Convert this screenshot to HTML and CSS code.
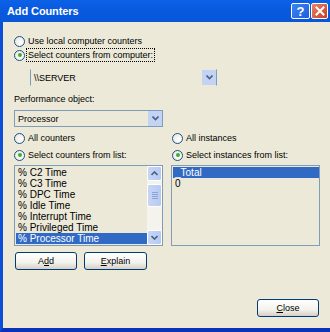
FILE: index.html
```html
<!DOCTYPE html>
<html>
<head>
<meta charset="utf-8">
<link rel="stylesheet" href="styles.css">
</head>
<body>
<div class="window">
  <div class="titlebar">
    <span class="title">Add Counters</span>
    <div class="tb-btns">
      <span class="tb-btn tb-help">?</span>
      <span class="tb-btn tb-close"><svg width="10" height="10" viewBox="0 0 10 10"><path d="M1.5 1.5 L8.5 8.5 M8.5 1.5 L1.5 8.5" stroke="#fff" stroke-width="2" stroke-linecap="square"/></svg></span>
    </div>
  </div>
  <div class="body">
    <div class="radio-row first"><span class="radio"></span><span>Use local computer counters</span></div>
    <div class="radio-row"><span class="radio checked"></span><span class="focus">Select counters from computer:</span></div>
    <div class="combo server">
      <span class="combo-text">\\SERVER</span>
      <span class="dd"><svg width="7" height="5" viewBox="0 0 7 5"><path d="M0.5 0.5 L3.5 3.5 L6.5 0.5" fill="none" stroke="#4d6185" stroke-width="1.6"/></svg></span>
    </div>
    <div class="label">Performance object:</div>
    <div class="combo obj">
      <span class="combo-text">Processor</span>
      <span class="dd"><svg width="7" height="5" viewBox="0 0 7 5"><path d="M0.5 0.5 L3.5 3.5 L6.5 0.5" fill="none" stroke="#4d6185" stroke-width="1.6"/></svg></span>
    </div>
    <div class="cols">
      <div class="col">
        <div class="radio-row"><span class="radio"></span><span>All counters</span></div>
        <div class="radio-row second"><span class="radio checked"></span><span>Select counters from list:</span></div>
        <div class="listbox counters">
          <ul class="items">
            <li>% C2 Time</li>
            <li>% C3 Time</li>
            <li>% DPC Time</li>
            <li>% Idle Time</li>
            <li>% Interrupt Time</li>
            <li>% Privileged Time</li>
            <li class="sel">% Processor Time</li>
          </ul>
          <div class="scrollbar">
            <span class="sb-btn"><svg width="7" height="5" viewBox="0 0 7 5"><path d="M0.5 4 L3.5 1 L6.5 4" fill="none" stroke="#4d6185" stroke-width="1.6"/></svg></span>
            <span class="sb-track"><span class="sb-thumb"><i></i><i></i><i></i><i></i></span></span>
            <span class="sb-btn"><svg width="7" height="5" viewBox="0 0 7 5"><path d="M0.5 1 L3.5 4 L6.5 1" fill="none" stroke="#4d6185" stroke-width="1.6"/></svg></span>
          </div>
        </div>
        <div class="btn-row">
          <button class="btn">A<u>d</u>d</button>
          <button class="btn"><u>E</u>xplain</button>
        </div>
      </div>
      <div class="col">
        <div class="radio-row"><span class="radio"></span><span>All instances</span></div>
        <div class="radio-row second"><span class="radio checked"></span><span>Select instances from list:</span></div>
        <div class="listbox instances">
          <ul class="items">
            <li class="sel">_Total</li>
            <li>0</li>
          </ul>
        </div>
      </div>
    </div>
    <div class="footer">
      <button class="btn"><u>C</u>lose</button>
    </div>
  </div>
</div>
</body>
</html>
```
FILE: styles.css
```css
html, body {
  margin: 0;
  padding: 0;
  background: #ece9d8;
}
.window {
  width: 330px;
  height: 332px;
  display: flex;
  flex-direction: column;
  font-family: "Liberation Sans", Arial, sans-serif;
  font-size: 9px;
  color: #000;
}
.titlebar {
  height: 22px;
  flex: none;
  background: linear-gradient(#0b62e6 0%, #0a5ae0 40%, #0857d8 100%);
  display: flex;
  align-items: center;
  padding-left: 7px;
  box-sizing: border-box;
}
.title {
  color: #fff;
  font-weight: bold;
  font-size: 11px;
  flex: 1;
  letter-spacing: -0.1px;
}
.tb-btns {
  display: flex;
  gap: 1px;
  padding-right: 2px;
  align-self: flex-start;
  margin-top: 3px;
}
.tb-btn {
  width: 17px;
  height: 16px;
  border: 1px solid #fff;
  border-radius: 2px;
  box-sizing: border-box;
  display: flex;
  align-items: center;
  justify-content: center;
  color: #fff;
  font-weight: bold;
  font-size: 13px;
}
.tb-help {
  background: linear-gradient(135deg, #3d86f0, #1d5ede);
  width: 19px;
}
.tb-close {
  background: linear-gradient(135deg, #e8826a, #c8411e);
}
.body {
  flex: 1;
  background: #ece9d8;
  border-left: 3px solid #0b4fd8;
  border-bottom: 4px solid #0a33b8;
  display: flex;
  flex-direction: column;
  padding: 12px 11px 11px 11px;
  box-sizing: border-box;
}
.radio-row {
  height: 14px;
  display: flex;
  align-items: center;
  gap: 3px;
}
.radio-row.second {
  margin-top: 3px;
}
.radio {
  width: 11px;
  height: 11px;
  box-sizing: border-box;
  border: 1px solid #1c5180;
  border-radius: 50%;
  background: radial-gradient(circle at 65% 65%, #fff 0%, #e4e3dc 100%);
  display: flex;
  align-items: center;
  justify-content: center;
  flex: none;
}
.radio.checked::after {
  content: "";
  width: 4px;
  height: 4px;
  border-radius: 50%;
  background: #3fae2e;
}
.focus {
  outline: 1px dotted #000;
  outline-offset: 1px;
}
.combo {
  height: 17px;
  box-sizing: border-box;
  border: 1px solid #7f9db9;
  display: flex;
  align-items: center;
  background: #ece9d8;
}
.combo.server {
  margin-top: 7px;
  margin-left: 16px;
  width: 187px;
  border-top-color: #ece9d8;
  border-bottom-color: #ece9d8;
}
.combo.obj {
  margin-top: 5px;
  width: 149px;
}
.combo-text {
  flex: 1;
  padding-left: 3px;
}
.dd {
  width: 14px;
  height: 15px;
  background: #c3d3f3;
  display: flex;
  align-items: center;
  justify-content: center;
}
.label {
  margin-top: 8px;
  height: 11px;
  line-height: 11px;
}
.cols {
  margin-top: 4px;
  display: grid;
  grid-template-columns: 149px 149px;
  column-gap: 8px;
}
.col {
  display: flex;
  flex-direction: column;
}
.col + .col .radio-row {
  padding-left: 1px;
}
.listbox {
  margin-top: 3px;
  height: 81px;
  box-sizing: border-box;
  border: 1px solid #7f9db9;
  display: flex;
  background: #ece9d8;
}
.items {
  list-style: none;
  margin: 0;
  padding: 1px 0 0 1px;
  flex: 1;
  font-size: 10px;
}
.items li {
  height: 11px;
  line-height: 11px;
  padding-left: 2px;
  white-space: nowrap;
}
.items li.sel {
  background: #316ac5;
  color: #fff;
}
.scrollbar {
  width: 15px;
  display: flex;
  flex-direction: column;
  background: #f4f3ee;
}
.sb-btn {
  height: 15px;
  box-sizing: border-box;
  border: 1px solid #fff;
  border-radius: 2px;
  background: linear-gradient(90deg, #c8d6f5, #b6caf2);
  display: flex;
  align-items: center;
  justify-content: center;
}
.sb-track {
  flex: 1;
  padding: 3px 0;
  display: flex;
  flex-direction: column;
}
.sb-thumb {
  height: 23px;
  box-sizing: border-box;
  border: 1px solid #fff;
  border-radius: 2px;
  background: linear-gradient(90deg, #c8d6f5, #b6caf2);
  display: flex;
  flex-direction: column;
  align-items: center;
  justify-content: center;
  gap: 1px;
}
.sb-thumb i {
  display: block;
  width: 6px;
  height: 1px;
  background: #8da4d6;
}
.btn-row {
  margin-top: 6px;
  display: flex;
  gap: 7px;
  padding-left: 1px;
}
.btn {
  font-family: "Liberation Sans", Arial, sans-serif;
  font-size: 9px;
  color: #000;
  height: 18px;
  box-sizing: border-box;
  border: 1px solid #003c74;
  border-radius: 3px;
  background: linear-gradient(#fff 0%, #f3f2ec 60%, #d6d0c5 100%);
  padding: 0;
  width: 62px;
}
.btn-row .btn + .btn {
  width: 63px;
}
.footer {
  margin-top: auto;
  display: flex;
  justify-content: flex-end;
}
```
